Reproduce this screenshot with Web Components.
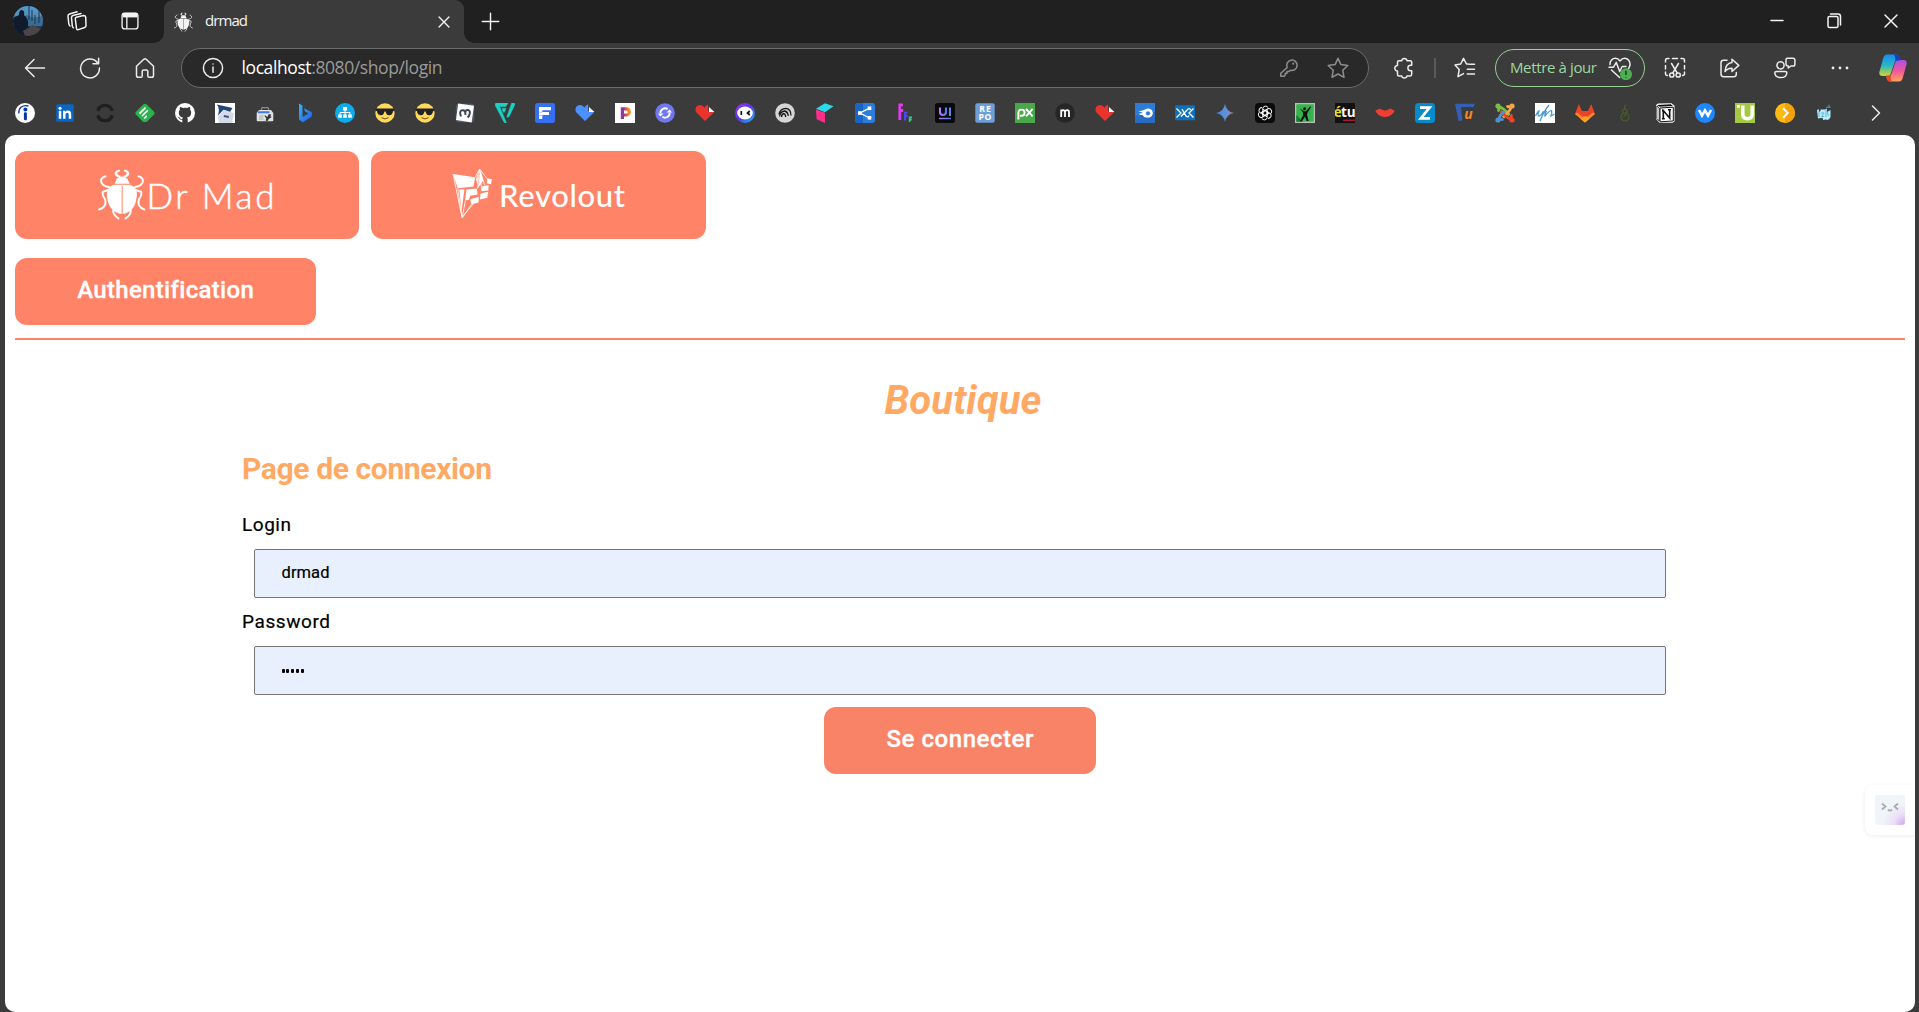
<!DOCTYPE html>
<html lang="fr">
<head>
<meta charset="utf-8">
<title>drmad</title>
<style>
html,body{margin:0;height:100%;overflow:hidden;background:#3b3b3b}
body{font-family:"Open Sans","Noto Sans",sans-serif}
</style>
</head>
<body>
<browser-window></browser-window>
<script>
const BEETLE = `<g fill="currentColor"><path d="M81 73L88 57Q95 51 104 51Q113 51 120 57L128 73Z"/><path d="M95 54C78 50 76 35 93 30L98 30L96 37L90 38C88 44 93 48 101 49ZM113 54C130 50 132 35 115 30L110 30L112 37L118 38C120 44 115 48 107 49Z"/><path d="M79 76H129C150 84 153 98 148 120C144 148 127 161 106 165V80H103V165C81 161 64 148 59 120C55 98 58 84 79 76Z"/></g><g fill="none" stroke="currentColor" stroke-width="6" stroke-linecap="round"><path d="M64 83C36 78 32 57 53 50M144 83C172 78 176 57 155 50"/><path d="M62 92L45 97Q42 107 51 119C57 134 50 147 33 151M146 92L163 97Q166 107 157 119C151 134 158 147 173 151"/><path d="M77 153Q76 167 93 178M131 153Q132 167 115 178"/></g>`;
const LINE = b => `<g fill="none" stroke="currentColor" stroke-width="1.5" stroke-linecap="round" stroke-linejoin="round">${b}</g>`;
const T = (x,y,s,f,t,extra='') => `<text x="${x}" y="${y}" font-size="${s}" fill="${f}" text-anchor="middle" font-family="Open Sans,sans-serif" font-weight="700" ${extra}>${t}</text>`;
const HEART = c => `<path d="M10 18L1.4 9.6C-.6 7 .6 2.2 4.6 2C7 1.9 8 3.3 9.6 4.4C11 2.6 12 1.6 13.2 1.6V8.2H19C19 9.6 18.4 10.2 17.4 11Z" fill="${c}"/><path d="M14 4L19.4 9H14Z" fill="#fff"/>`;
const COOL = `<circle cx="10" cy="10" r="9.7" fill="#ffd95c"/><path d="M.7 5.6H19.3V7.4L18 8.2C17.4 11.6 15.8 12.2 14 12.2S11.2 11 10.6 8.4H9.4C8.8 11 7.8 12.2 6 12.2S2.6 11.6 2 8.2L.7 7.4Z" fill="#222"/><path d="M6.5 14.6Q10 17.3 13.5 14.6" fill="none" stroke="#6b4d18" stroke-width="1"/>`;
const ICONS = {
 beetle:['30 25 148 158',BEETLE],
 revolout:['34 28 122 154',`<g fill="currentColor"><path d="M37 46L103 56L98 84L51 89Z"/><path d="M77 93L108 90L110 108L88 112L85 124L73 126Z"/><path d="M56 93L71 92L66 130L62 160Z"/><path d="M89 122L114 115L113 132L91 138Z"/><path d="M138 59L153 62L150 77L138 75Z"/><path d="M121 84L143 79L142 96L121 98Z"/><path d="M119 105L142 100L139 118L117 123Z"/><path d="M114 38L119 38L127 66L112 88L105 60Z"/></g><g fill="none" stroke="currentColor" stroke-width="2.5" stroke-linejoin="round"><path d="M103 56L116 31L138 60M110 90L116 31L121 84M116 31L131 80M37 46L64 178L51 89M64 178L74 126M64 178L92 138M64 178L97 136"/></g><path d="M116 42L111 84M107 62L113 44" stroke="#ff8367" stroke-width="1.6"/>`],
 avatar:['0 0 30 30',`<defs><clipPath id="c"><circle cx="15" cy="15" r="15"/></clipPath><linearGradient id="g" x2="0" y2="1"><stop stop-color="#4d9bd0"/><stop offset=".35" stop-color="#5c8db4"/><stop offset=".5" stop-color="#26496a"/><stop offset="1" stop-color="#162636"/></linearGradient></defs><g clip-path="url(#c)"><path d="M0 0H30V30H0Z" fill="url(#g)"/><path d="M0 9L8 12L14 9L20 12L30 10V20H0Z" fill="#3b6c93"/><path d="M16 0V14M19 4V15M22 9V18M26 3V17" stroke="#17364f" stroke-width="1"/><path d="M0 12L6 9Q6 4 9 4Q12 5 11 9Q16 13 15 20L22 30H0Z" fill="#101c2e"/><path d="M10 25L20 19L29 24L24 30H12Z" fill="#4b4548"/></g>`],
 spaces:['0 0 20 20',LINE(`<path d="M9.2 6.2L16.5 4.5Q18.5 4.5 18.7 6.2L19 14.5Q19 16 17.6 16.5L11.4 18.6Q9.8 19 9.5 17.4L8.3 8Q8.2 6.5 9.2 6.2Z"/><path d="M6.4 16.8Q5.5 16.2 5.3 15L4.5 6.8Q4.4 5 6 4.5L14 2.4M3 15Q2 14.2 1.8 13L1 5.2Q1 3.5 2.5 3L10 .8"/>`)],
 tabs:['0 0 20 20',`<path d="M2 1H18V6H2Z" fill="currentColor"/>`+LINE(`<rect x="1.2" y="1.2" width="17.6" height="17.6" rx="3"/><path d="M6.5 6V18"/>`)],
 close:['0 0 20 20',LINE(`<path d="M4.5 4.5L15.5 15.5M15.5 4.5L4.5 15.5"/>`)],
 plus:['0 0 20 20',LINE(`<path d="M10 1.3V18.7M1.3 10H18.7"/>`)],
 min:['0 0 20 20',LINE(`<path d="M4 9.5H16"/>`)],
 restore:['0 0 20 20',LINE(`<rect x="4" y="5.5" width="10" height="11" rx="1.5"/><path d="M6.5 3H14Q16.5 3 16.5 5.5V14"/>`)],
 wclose:['0 0 20 20',LINE(`<path d="M4 4L16 16M16 4L4 16"/>`)],
 back:['0 0 22 22',LINE(`<path d="M20.5 11H1.5M10 2.5L1.5 11L10 19.5"/>`)],
 reload:['0 0 22 22',LINE(`<path d="M18.5 5.8A9.4 9.4 0 1 0 20.4 11M19.6 1.3V6.8H14"/>`)],
 home:['0 0 22 22',LINE(`<path d="M2.5 9.3L9.8 2.3Q11 1.3 12.2 2.3L19.5 9.3V18.5Q19.5 20.3 17.8 20.3H15Q13.8 20.3 13.8 19V14.5Q13.8 13 12.3 13H9.7Q8.2 13 8.2 14.5V19Q8.2 20.3 7 20.3H4.2Q2.5 20.3 2.5 18.5Z"/>`)],
 info:['0 0 22 22',LINE(`<circle cx="11" cy="11" r="9.6"/><path d="M11 10V15.3M11 7V7.1"/>`)],
 key:['0 0 20 20',LINE(`<path d="M8.2 9.5A5.2 5.2 0 1 1 11.2 12.2L9.8 13.5H8V15.3H6.3V17L5 18.3H1.8V15.3Z"/><path d="M14.2 5.6V5.8" stroke-width="2"/>`)],
 star:['0 0 22 22',LINE(`<path d="M11 1.3L13.9 7.6L20.8 8.5L15.8 13.3L17 20.3L11 17L5 20.3L6.2 13.3L1.2 8.5L8.1 7.6Z"/>`)],
 puzzle:['0 0 22 22',LINE(`<path d="M6 3.7H8.7A2.7 2.7 0 0 1 14 3.7H17.2Q18.7 3.7 18.7 5.2V8.2H17.7A2.8 2.8 0 0 0 17.7 13.8H18.7V17.3Q18.7 18.9 17.2 18.9H14A2.7 2.7 0 0 1 8.7 18.9H6Q4.5 18.9 4.5 17.4V14A2.7 2.7 0 1 1 4.5 8.6V5.2Q4.5 3.7 6 3.7Z"/>`)],
 fav:['0 0 22 22',LINE(`<path d="M14 7H12.5L9.5 1.3L6.7 7L1 8L5.2 12.4L4 19.7L9.5 16.6M15 7.2H20.5M13.3 12.2H20.5M13.3 17H20.5"/>`)],
 heart:['0 0 24 24',LINE(`<path d="M2 8.5C1.8 4.6 4.4 2.3 7.4 2.3Q10 2.3 12 5Q14 2.3 16.6 2.3C20 2.3 22.3 5.2 22 8.8Q21.7 11 20.5 12.5M3.5 14L11.6 21.5M1 11.2H5.5L8.3 6.4L11.7 15.5L14.2 10.5H18"/>`)+`<circle cx="18" cy="18.2" r="6" fill="#4caf50"/><path d="M18 14.7V19M18 21V21.4" stroke="#1d3b1e" stroke-width="1.5"/>`],
 shot:['0 0 22 22',LINE(`<path d="M1.5 5V3.5Q1.5 1.5 3.5 1.5H5M8.5 1.5H13.5M17 1.5H18.5Q20.5 1.5 20.5 3.5V5M1.5 8.5V12M20.5 8.5V12M1.5 15V16.5Q1.5 18.5 3.5 18.5M20.5 15V16.5Q20.5 18.5 18.5 18.5M7.5 6.5L13.2 16M14.5 6.5L8.8 16"/><circle cx="7.8" cy="18" r="2.1"/><circle cx="14.2" cy="18" r="2.1"/>`)],
 share:['0 0 22 22',LINE(`<path d="M8 3.2H4.5Q2 3.2 2 5.7V17Q2 19.7 4.7 19.7H14.8Q17.3 19.7 17.3 17V15.5M13 2.2L19.8 8.4L13 14.5V11.2Q8.5 11 6 14.5Q6.5 6.2 13 5.5Z"/>`)],
 people:['0 0 22 22',LINE(`<circle cx="6.5" cy="8.3" r="3.6"/><path d="M2.5 14.5H11Q13 14.5 12.8 16C12.6 19 10 20.6 6.8 20.6S1 19 .8 16Q.8 14.5 2.5 14.5Z"/><path d="M13.3 1.2H19Q20.9 1.2 20.9 3V7.2Q20.9 9 19 9H17L14.3 11V9Q12 9 12 7V2.8Q12 1.2 13.3 1.2Z"/>`)],
 dots:['0 0 22 22',`<g fill="currentColor"><circle cx="4" cy="11" r="1.4"/><circle cx="11" cy="11" r="1.4"/><circle cx="18" cy="11" r="1.4"/></g>`],
 copilot:['0 0 28 28',`<defs><linearGradient id="a" x2="0" y2="1"><stop stop-color="#1b8cf0"/><stop offset=".5" stop-color="#26b6c7"/><stop offset="1" stop-color="#d6d52b"/></linearGradient><linearGradient id="b" x2="0" y2="1"><stop stop-color="#a850e8"/><stop offset=".5" stop-color="#f0569a"/><stop offset="1" stop-color="#ffa25a"/></linearGradient></defs><path d="M8 .5H17Q19.5 .5 20.3 4L21 6.5H18Q16 6.5 15.3 9L12 19Q11 22 8 22H3.5Q-.5 22 .5 17.5L4 5Q5 .5 8 .5Z" fill="url(#a)"/><path d="M20 27.5H11Q8.5 27.5 7.7 24L7 21.5H10Q12 21.5 12.7 19L16 9Q17 6 20 6H24.5Q28.5 6 27.5 10.5L24 23Q23 27.5 20 27.5Z" fill="url(#b)"/><path d="M15 .5H17Q19.5 .5 20.3 4L21 6.5H18Q17 6.5 16.3 7.3Q17 3 15 .5Z" fill="#123fc0"/><path d="M7 21.5H10Q11.5 21.5 12.2 20.5Q11 25 13 27.5H11Q8.5 27.5 7.7 24Z" fill="#e6462b"/>`],
 chev:['0 0 20 20',LINE(`<path d="M6.5 3L13.5 10L6.5 17"/>`)],
 face:['0 0 30 30',`<defs><radialGradient id="f" cx="1" cy="1" r=".75"><stop stop-color="#cda5ee"/><stop offset=".5" stop-color="#ebdff6"/><stop offset="1" stop-color="#f1f4f8"/></radialGradient></defs><rect width="30" height="30" rx="3" fill="url(#f)"/><path d="M7 8.5L10.5 11.5L7 14.5M23 8.5L19.5 11.5L23 14.5M13 14.4Q15 16.8 17 14.4" fill="none" stroke="#a6abb1" stroke-width="1.8"/>`]
};
/* Favicons of the bookmarks bar, in order, on a 20 unit grid */
const MARKS = [
`<circle cx="10" cy="10" r="10" fill="#fff"/><path d="M3.8 10.5C3.5 5 7.5 1.4 13.4 3" fill="none" stroke="#0b3aa8" stroke-width="1.3"/><circle cx="10.4" cy="6.4" r="2" fill="#0b3aa8"/><rect x="8.9" y="9.2" width="3" height="8" rx="1.2" fill="#0b3aa8"/>`,
`<rect x="1.2" y="1.2" width="17.6" height="17.6" rx="1.5" fill="#0a66c2"/><g fill="#fff"><rect x="3.8" y="7.8" width="2.5" height="8"/><circle cx="5" cy="5.2" r="1.5"/><path d="M8 7.8H10.4V9Q11.2 7.6 13 7.6Q16.2 7.6 16.2 11.2V15.8H13.7V11.7Q13.7 9.8 12.2 9.8T10.5 11.7V15.8H8Z"/></g>`,
`<path d="M2.8 7.8A7.5 7.5 0 0 1 17.2 7.8M17.2 12.2A7.5 7.5 0 0 1 2.8 12.2" fill="none" stroke="#1f1f1f" stroke-width="3.4"/>`,
`<path d="M10 .8Q11 .8 12 1.8L19 8.8Q20.4 10.2 19 11.6L12.2 18.4Q11.4 19 10 19T7.6 18.4L1 11.6Q-.4 10.2 1 8.8L8 1.8Q9 .8 10 .8Z" fill="#2bb24c"/><path d="M4.5 10.7L10.5 4.7M7 13L12.7 7.3M9.2 15.5L11.8 12.9" stroke="#fff" stroke-width="1.7"/>`,
`<circle cx="10" cy="10" r="10" fill="#fff"/><path d="M7.3 20V16.8Q4.8 17.2 4 15.2L2.8 14.2Q4.4 13.7 5.2 15.4Q6 16.3 7.4 15.7Q7.5 15 8 14.5Q3.8 14 3.8 9.8Q3.8 8 4.9 6.8Q4.4 5.2 5.1 4Q6.4 4 7.9 5.1Q10 4.5 12.1 5.1Q13.6 4 14.9 4Q15.6 5.2 15.1 6.8Q16.2 8 16.2 9.8Q16.2 14 12 14.5Q12.7 15.2 12.7 16.5V20Z" fill="#3b3b3b"/>`,
`<path d="M0 0H20V20H0Z" fill="#fff"/><path d="M2 1.5L17.5 5L15 9L8.5 6.8L3 12.5Q5 6 2 1.5Z" fill="#214778"/><path d="M3 14L9 6.8L19 10.2L17 20H4Z" fill="#d5dae5"/><path d="M9 12L14 13L13.6 15L8.7 14Z" fill="#35598c"/>`,
`<path d="M6.5 8V5.6Q6.5 4.7 7.4 4.7H12.6Q13.5 4.7 13.5 5.6V8" fill="none" stroke="#8b8f95" stroke-width="1.2"/><path d="M4 7H16L18.3 10V17.3Q18.3 18.3 17.3 18.3H2.7Q1.7 18.3 1.7 17.3V10Z" fill="#dfe1e4"/><path d="M3.3 8.3H14.5V10.2H2.6Z" fill="#3d7de8"/><path d="M4 12H8.5V17H4Z" fill="#c3c6ca"/><path d="M9.5 12.6Q11 12.4 11.5 13.6L12.5 13.9L13.4 11.4Q15 11 16.3 11.6L15.2 13.2L16.6 13.8Q15.8 15.6 14 15.5L12.4 18.3L10.7 17.5L11.3 15Q9.8 14.6 9.5 12.6Z" fill="#333"/>`,
`<defs><linearGradient id="bg" x2="1" y2="1"><stop stop-color="#36b5fa"/><stop offset="1" stop-color="#2459e6"/></linearGradient></defs><path d="M4 .5L7.5 2.5V14L13.5 10.5L10 8.5L9 5.3L16.5 9Q18.2 11.5 16.5 13.7L7.8 19.3L4 16.5Z" fill="url(#bg)"/>`,
`<circle cx="10" cy="10" r="10" fill="#0cabec"/><g fill="#fff"><path d="M8 4H12V7.5H8ZM3.2 11.5H6.8V14.7H3.2ZM8.2 11.5H11.8V14.7H8.2ZM13.2 11.5H16.8V14.7H13.2Z"/></g><path d="M5 12V9.5H15V12M10 7V12" stroke="#fff" fill="none"/>`,
COOL,COOL,
`<rect x=".8" y=".8" width="18.4" height="18.4" rx="3" fill="#4e5a6c"/><path d="M3.2 .6L19 2.8L16.6 19.4L1 17Z" fill="#fff"/><path d="M6 13.5L5.2 10.8Q4.8 7 8 7.2Q10.2 7.3 10.3 9.6Q10.5 6.6 13 7Q15.6 7.6 14.6 11Q14 13.4 12.6 14.6M10.3 9.3L10.5 12" fill="none" stroke="#3d4756" stroke-width="2"/>`,
`<path d="M0 1.5Q0 0 1.6 0H13L10.8 3.4H4.6L11.5 20Q9.6 20.4 8.8 18.7L.5 3Q0 2 0 1.5ZM7 5.6H11L9.4 9.3H8.3ZM16.7 0H18.7Q20.4 0 19.7 2L14.3 13.3Q13.5 14.7 11.8 14Z" fill="#1ad1c4" stroke="#1ad1c4" stroke-width=".5"/>`,
`<rect width="20" height="20" rx="2.5" fill="#356ff2"/><path d="M4 16V4H16V7.2H7.3V9H14V12H7.3V16Z" fill="#fff"/><path d="M3.8 9.2H7.3M3.8 12.5H7.3" stroke="#a9c3ff"/>`,
HEART('#4a90ff'),
`<path d="M0 0H20V20H0Z" fill="#fff"/><defs><linearGradient id="pg" x2="1" y2="0"><stop offset=".2" stop-color="#8a3c9c"/><stop offset=".5" stop-color="#e8543f"/><stop offset="1" stop-color="#ef9a2d"/></linearGradient></defs><path d="M7.4 16V5.8H11.3A3.1 3.1 0 0 1 11.3 12H8" fill="none" stroke="url(#pg)" stroke-width="3.2"/>`,
`<circle cx="10" cy="10" r="9.8" fill="#7177ec"/><path d="M5.4 10.3A4.6 4.6 0 0 1 12.6 6.2M14.6 9.7A4.6 4.6 0 0 1 7.4 13.8" fill="none" stroke="#fff" stroke-width="1.9"/><path d="M11.5 9.5H17L14.6 6.5ZM8.5 10.5H3L5.4 13.5Z" fill="#fff"/>`,
HEART('#e8332e'),
`<defs><linearGradient id="dg" x2="1" y2="1"><stop stop-color="#a52cf0"/><stop offset=".5" stop-color="#5538f0"/><stop offset="1" stop-color="#19c9ee"/></linearGradient></defs><circle cx="10" cy="10" r="10" fill="url(#dg)"/><ellipse cx="10" cy="10" rx="7.8" ry="6.5" fill="#fff"/><path d="M6.3 8V12M14.8 8L12.5 10L14.8 12" stroke="#111" stroke-width="1.7" fill="none"/>`,
`<circle cx="10" cy="10" r="9.8" fill="#d5d5d5"/><g fill="none" stroke="#191919" stroke-width="1.3"><path d="M4 11.5Q5 5.5 11 5.3Q16 6 16 12.5M4.6 13.5Q5 8.5 9.8 8Q13 8.5 13.2 13M6.5 14Q6.6 11 9 10.5Q10.6 11 10.6 14M10 8Q13 10 13.2 13"/></g>`,
`<path d="M10 .2L18.5 3.2L10 9.2L1 5.8Z" fill="#29dbe6"/><path d="M1 6.4L10 9.8V20L1.6 16.3Z" fill="#ff2e88"/>`,
`<rect width="20" height="20" rx="3" fill="#2c7cdd"/><path d="M0 3Q0 0 3 0H8V20H3Q0 20 0 17Z" fill="#1965c6"/><path d="M14.5 5.2L5 10L14.5 15" fill="none" stroke="#fff" stroke-width="1.4"/><g fill="#fff"><rect x="12.7" y="3.5" width="3.6" height="3.6"/><rect x="3" y="8.2" width="3.6" height="3.6"/><rect x="12.7" y="13" width="3.6" height="3.6"/></g>`,
`<path d="M4.8 17V1.8H8M4.8 7.5H8.2" fill="none" stroke="#e13af0" stroke-width="2.8"/><path d="M10 17.5V9.8H12.6M10 13H12.6" fill="none" stroke="#4c46ff" stroke-width="2"/><path d="M14.6 19V14.4H17M14.6 16.6H16.8" fill="none" stroke="#27cf85" stroke-width="1.7"/>`,
`<defs><linearGradient id="ug" x2="1" y2="0"><stop stop-color="#b57bff"/><stop offset="1" stop-color="#4d7fe6"/></linearGradient></defs><rect width="20" height="20" rx="2.5" fill="#0a0a0c"/><path d="M5 4.5V9Q5 12 8 12T11 9V4.5" fill="none" stroke="url(#ug)" stroke-width="2.1"/><path d="M14 4.5H16V13H14Z" fill="#6583e8"/><path d="M4 14.8H16V16.2H4Z" fill="url(#ug)"/>`,
`<rect x=".3" y=".2" width="19.4" height="19.6" rx="2" fill="#6f9fd8"/>`+T(10.5,9,8.6,'#fff','RE','letter-spacing="1"')+T(10.2,17.2,8.6,'#fff','PO','letter-spacing=".5"'),
`<path d="M0 0H20V20H0Z" fill="#48a84a"/><g fill="none" stroke="#fff" stroke-width="1.9"><path d="M3.4 16.5V9.6A3.1 3.1 0 1 1 6.5 12.8H5M11 5.8L17.6 13.3M17.6 5.8L11 13.3"/></g>`,
`<circle cx="10" cy="10" r="9.8" fill="#262626"/><path d="M6.2 14V6.5M6.2 9.2Q6.4 7.2 8.1 7.2T10 9.2V14M10 9.2Q10.3 7.2 12.2 7.2T14 9.2V14" fill="none" stroke="#fff" stroke-width="1.8"/>`,
HEART('#e8332e'),
`<path d="M0 0H20V20H0Z" fill="#2d7cd8"/><path d="M0 13L20 9V20H0Z" fill="#286dc3"/><path d="M2 7.4Q6 9 10 6.6Q14 4 17 7.2Q19.4 12.2 14.6 14.4Q9 15.2 7.6 12Q5 12.4 3.8 10.7L8.2 10Z" fill="#fff"/><circle cx="13" cy="10.3" r="2.1" fill="#2d7cd8"/>`,
`<rect y="2.3" width="20" height="15" rx="1" fill="#0c70bd"/><path d="M1.5 5.5L6 10L1.5 14.5M6 13.5L13 6Q15 5 15.5 7M7 6L11 13Q13 15 14 12.5M18.5 5.5L14 10L18.5 14.5" fill="none" stroke="#fff" stroke-width="1.3"/>`,
`<defs><linearGradient id="gg" x1="0" x2="1"><stop stop-color="#3e8ce8"/><stop offset=".6" stop-color="#6490d6"/><stop offset="1" stop-color="#ba7389"/></linearGradient></defs><path d="M10 1Q11.3 8.7 19 10Q11.3 11.3 10 19Q8.7 11.3 1 10Q8.7 8.7 10 1Z" fill="url(#gg)"/>`,
`<rect width="20" height="20" rx="4" fill="#0b0b0b"/><g fill="none" stroke="#fff" stroke-width=".95">${[0,60,120,180,240,300].map(a=>`<path transform="rotate(${a} 10 10)" d="M7.8 11.3V5.4Q8.2 3.2 10.4 3.1Q12.2 3.1 13.3 4.7M12.2 11.3V8.7L7.8 6.2"/>`).join('')}</g>`,
`<path d="M0 0H20V20H0Z" fill="#b9bdb9"/><path d="M1.3 1.3H18.7V18.7H1.3Z" fill="#34b44a"/><path d="M1.3 18.7V12L8 18.7Z" fill="#177c2e"/><circle cx="9.6" cy="5.8" r="1.5" fill="#111"/><path d="M4.8 5.2L9 8.3H11L15.3 3.2L16 4.2L12.6 9.6L12 12L13.8 18H11.6L10 13.5L7 18.2H4.8L8 12.5V9.6Z" fill="#111"/>`,
`<path d="M0 0H20V20H0Z" fill="#111"/><path d="M8 16.5H20V18H8Z" fill="#a6192e"/>`+T(2.8,14.2,13.5,'#ece032','é')+T(13.3,14.2,13.5,'#fff','tu'),
`<path d="M.3 7.8L4.8 5.4Q10 9.4 15.2 5.4L19.7 7.8Q17 13.8 10 14Q3 13.8 .3 7.8Z" fill="#f03e35"/>`,
`<rect width="20" height="20" rx="3.5" fill="#078bc9"/><path d="M5 4.6H14.5L5.8 15.4H15" fill="none" stroke="#fff" stroke-width="2.7"/>`,
`<path d="M0 .7H20L18.5 4H6L7.5 17.5L3.5 18Z" fill="#355fb2"/>`+T(13.5,15.5,14,'#f6861f','u','font-style="italic"'),
`<g fill="none" stroke-width="3"><path d="M4.2 8.5Q2.5 5.5 5.5 4.5Q7.5 4.5 14.5 12.2" stroke="#7ac143"/><path d="M11.6 4.3Q14 2.6 15.6 5Q15.8 7 8 14.5" stroke="#f9a541"/><path d="M15.7 11.6Q17.4 14 15 15.6Q13 15.8 5.5 8" stroke="#f44321"/><path d="M8.3 15.7Q6 17.4 4.4 15Q4.2 13 9.5 8" stroke="#5091cd"/></g><circle cx="3" cy="3" r="2.6" fill="#7ac143"/><circle cx="17" cy="3" r="2.6" fill="#f9a541"/><circle cx="17" cy="17" r="2.6" fill="#f44321"/><circle cx="3" cy="17" r="2.6" fill="#5091cd"/>`,
`<path d="M0 0H20V20H0Z" fill="#fff"/><path d="M.5 13Q3 8 4 8Q2 13 4 13T8.5 8M14 2Q9 8 5 18M6 11.5Q9 10 11.5 8Q9 13 10 13Q13.5 8.5 16 7.5Q17.5 7.5 16 13L19.5 11" fill="none" stroke="#499dd5" stroke-width="1.3"/>`,
`<path d="M3.8 1L7 8H13L16.2 1L20 11L10 19.6L0 11Z" fill="#e8442a"/><path d="M0 11L2 9.5L10 15.5L18 9.5L20 11L10 19.6Z" fill="#fc8426"/><path d="M5.5 15.7L10 12.3L14.5 15.7L10 19.6Z" fill="#fca326"/><path d="M5 8H15L10 14Z" fill="#e8442a"/>`,
`<path d="M10 18A4.1 4.1 0 1 1 12.4 10.5M10 18A4 4 0 0 0 12.8 11.2M8 10.5Q6.5 6.5 9.8 6Q13 6.5 11.7 10L8.5 14M10 6Q9 3 11 1.8" fill="none" stroke="#4b6027" stroke-width="1.1"/>`,
`<path d="M1 2L3 .6L16.5 .2L19.5 2.7V18.5L17.5 19.8L4.5 19.8L1 16Z" fill="#fff"/><path d="M2 2L15.8 1.3L18 3L4.5 3.8Z" fill="#111"/><path d="M1.8 3L4.2 5V18L1.8 15.5Z" fill="#fff" stroke="#111" stroke-width=".8"/><path d="M5 5L18.3 4.2V18L5 18.8Z" fill="#fff" stroke="#111"/><path d="M8.3 15.7V7.6L14.7 15V6.8M7 7.6H9.3M13 6.8H16M7 15.7H9.8" fill="none" stroke="#111" stroke-width="1.6"/>`,
`<circle cx="10" cy="10" r="10" fill="#1f87ff"/><path d="M4 7L7 12.7L10 7.3L13 12.7L16 7" fill="none" stroke="#fff" stroke-width="2.5"/>`,
`<path d="M0 0H20V20H0Z" fill="#a6c944"/><path d="M7.8 2.5V11Q7.8 15.7 12.5 15.7T17.2 11V2.5" fill="none" stroke="#fff" stroke-width="3.5"/><path d="M2 2H4.8V4.8H2Z" fill="#fff"/>`,
`<circle cx="10" cy="10" r="10" fill="#fdba13"/><path d="M10 0A10 10 0 0 1 10 20Z" fill="#f5a10c"/><path d="M8.2 5.3L12.7 10L8.2 14.7" fill="none" stroke="#fff" stroke-width="2"/>`,
`<path d="M2 7L4 6.2V9L5.5 8V6.5H10L12 5.5V9L15.5 7V14Q14 18 11 16.5L8 17L7.5 14.8L3 15.5Z" fill="#b9ecfa"/><path d="M4 8V14M6 10H9L6.5 13.5H9M11 6.5V14M12.5 9L13.3 13" fill="none" stroke="#4fb2d6" stroke-width=".9"/><path d="M10.5 5L14.2 1.3L16 5Z" fill="#3f7c96"/>`
];

class UiIcon extends HTMLElement{
  connectedCallback(){
    const r=this.attachShadow({mode:'open'}), n=this.getAttribute('name'), w=this.getAttribute('w')||20, h=this.getAttribute('h')||w;
    const [vb,body]=ICONS[n];
    r.innerHTML=`<style>:host{display:inline-flex;flex:none}svg{display:block}</style><svg width="${w}" height="${h}" viewBox="${vb}" preserveAspectRatio="none">${body}</svg>`;
  }
}
customElements.define('ui-icon',UiIcon);

/* A single-line label whose letter spacing is tuned to fill a given width */
class FitLabel extends HTMLElement{
  connectedCallback(){
    const r=this.attachShadow({mode:'open'});
    r.innerHTML=`<style>:host{display:block;white-space:nowrap;width:max-content}span{display:inline-block}</style><span><slot></slot></span>`;
    const s=r.querySelector('span'), w=+this.getAttribute('w'), n=this.textContent.length;
    const gap=(w-s.getBoundingClientRect().width)/(n-1);
    s.style.letterSpacing=gap+'px';
    s.style.marginRight=-gap+'px';
  }
}

class TabStrip extends HTMLElement{
  connectedCallback(){
    this.attachShadow({mode:'open'}).innerHTML=`<style>
    :host{display:flex;height:43px;background:#202020;color:#f3f3f3;align-items:center}
    .left{display:flex;width:164px;align-items:center;padding-left:13px;box-sizing:border-box;margin-top:-1px}
    .left ui-icon:nth-child(2){margin-left:24px}.left ui-icon:nth-child(3){margin-left:34px}
    .tab{position:relative;display:flex;align-items:center;width:300px;height:43px;padding:0 11px 0 10px;box-sizing:border-box;background:#3b3b3b;border-radius:9px 9px 0 0}
    .tab::before,.tab::after{content:"";position:absolute;bottom:0;width:10px;height:10px}
    .tab::before{left:-10px;background:radial-gradient(circle at 0 0,transparent 9.5px,#3b3b3b 10px)}
    .tab::after{right:-10px;background:radial-gradient(circle at 100% 0,transparent 9.5px,#3b3b3b 10px)}
    fit-label{margin-left:12px;font:15px/20px "Open Sans",sans-serif;flex:1;margin-top:-3px}
    .plus{margin:-1px 0 0 17px}.win{margin:-1px 0 0 auto;display:flex;gap:37px;padding-right:18px}
    </style>
    <div class="left"><ui-icon name="avatar" w="30"></ui-icon><ui-icon name="spaces" w="20"></ui-icon><ui-icon name="tabs" w="18"></ui-icon></div>
    <div class="tab"><ui-icon name="beetle" w="19" h="20"></ui-icon><fit-label w="43">drmad</fit-label><ui-icon name="close" w="18"></ui-icon></div>
    <ui-icon class="plus" name="plus" w="19"></ui-icon>
    <div class="win"><ui-icon name="min"></ui-icon><ui-icon name="restore"></ui-icon><ui-icon name="wclose"></ui-icon></div>`;
  }
}
class ToolBar extends HTMLElement{
  connectedCallback(){
    const c=(n,w=22,h=w)=>`<div class="cell"><ui-icon name="${n}" w="${w}" h="${h}"></ui-icon></div>`;
    this.attachShadow({mode:'open'}).innerHTML=`<style>
    :host{display:flex;height:49px;align-items:center;padding-left:7.5px;color:#ececec;background:#3b3b3b}
    .cell{width:55px;display:flex;justify-content:center;flex:none}
    .url{display:flex;align-items:center;width:1188px;height:40px;box-sizing:border-box;border:1px solid #6c6c6c;border-radius:20px;background:#292929;margin:0 8px 0 8px;padding:0 19px 0 20px;flex:none}
    fit-label{font:17.5px/24px "Open Sans",sans-serif;color:#9a9a9a}b{font-weight:400;color:#fff}
    .url fit-label{margin:-1px 0 0 18px}.url .k{margin-left:auto;color:#8e8e8e;display:flex;gap:28px;align-items:center}
    .sep{width:2px;height:20px;background:#5a5a5a;margin:0 2px}
    .upd{display:flex;align-items:center;box-sizing:border-box;width:150px;height:38px;border:1.5px solid #94d295;border-radius:19px;margin:0 2.5px;padding-left:14px;flex:none}
    .upd fit-label{font-size:15px;color:#9fd89f;margin-top:-1px}.upd ui-icon{margin-left:11px;color:#ececec}
    </style>${c('back')}${c('reload')}${c('home')}
    <div class="url"><ui-icon name="info" w="22"></ui-icon><fit-label w="201"><b>localhost</b>:8080/shop/login</fit-label><div class="k"><ui-icon name="key" w="20"></ui-icon><ui-icon name="star" w="22"></ui-icon></div></div>
    ${c('puzzle')}<div class="sep"></div>${c('fav')}
    <div class="upd"><fit-label w="87">Mettre à jour</fit-label><ui-icon name="heart" w="24"></ui-icon></div>
    ${c('shot')}${c('share')}${c('people')}${c('dots')}<ui-icon name="copilot" w="28" style="margin-left:11px"></ui-icon>`;
  }
}
class BookmarkBar extends HTMLElement{
  connectedCallback(){
    this.attachShadow({mode:'open'}).innerHTML=`<style>
    :host{display:flex;height:43px;align-items:center;gap:20px;padding:0 0 1px 15px;background:#3b3b3b;color:#ececec;box-sizing:border-box}
    svg{flex:none;display:block;overflow:hidden}ui-icon{margin-left:11px}
    </style>${MARKS.map(m=>`<svg width="20" height="20" viewBox="0 0 20 20">${m}</svg>`).join('')}<ui-icon name="chev"></ui-icon>`;
  }
}
class NavButton extends HTMLElement{
  connectedCallback(){
    this.attachShadow({mode:'open'}).innerHTML=`<style>
    :host{display:flex;justify-content:center;box-sizing:border-box;border-radius:12px;background:var(--fill,#ff8367);color:#fff;font:500 24px/30px Roboto,sans-serif;-webkit-text-stroke:.3px #fff}
    </style><slot></slot>`;
  }
}
class FormField extends HTMLElement{
  connectedCallback(){
    this.attachShadow({mode:'open'}).innerHTML=`<style>
    :host{display:flex;flex-direction:column;height:97px}
    .label{height:37px;font:19px/26px Roboto,sans-serif;color:#000;-webkit-text-stroke:.2px #000;box-sizing:border-box}
    .box{margin-left:12px;width:1412px;height:49px;box-sizing:border-box;border:1px solid #767676;border-radius:2px;background:#e8f0fe;padding:12px 0 0 26.5px;font:16.5px/22px Roboto,sans-serif;color:#000;-webkit-text-stroke:.2px #000}
    </style><div class="label"><slot name="label"></slot></div><div class="box"><slot></slot></div>`;
  }
}
class ShopPage extends HTMLElement{
  connectedCallback(){
    this.attachShadow({mode:'open'}).innerHTML=`<style>
    :host{display:flex;flex-direction:column;box-sizing:border-box;width:1910px;height:877px;margin-left:5px;background:#fff;border-radius:10px;padding:16px 9px 0 10px;position:relative;font-family:Roboto,sans-serif}
    .row{display:flex;gap:12px}.row nav-button{height:88px;padding-top:17px}
    .dr{width:344px}.re{width:335px}
    .dr ui-icon{margin-left:-2px}
    .dr fit-label{font:300 35px/42px Lato,sans-serif;-webkit-text-stroke:.5px #fff;margin:6px 0 0 1px}
    .re fit-label{font:500 31px/42px Lato,sans-serif;-webkit-text-stroke:0;margin:6px 0 0 6px}
    .auth{width:301px;height:67px;margin-top:19px;padding-top:17px}
    hr{width:1890px;height:2px;border:0;margin:13px 0 0;background:#ff8367}
    h1,h2{margin:0;color:#ffa965}
    h1{font:italic 700 40px/48px Roboto,sans-serif;align-self:center;margin:37px 0 0 5px}
    .form{display:flex;flex-direction:column;width:1424px;margin-left:227px}
    h2{font:700 30px/36px Roboto,sans-serif;margin:26px 0 25px}
    .pw{display:flex;gap:1.75px;padding-top:10px}.pw i{width:3px;height:4px;border-radius:1px;background:#000}
    .go{--fill:#f98367;width:272px;height:67px;margin:1px 0 0 582px;padding-top:17px}
    .widget{position:absolute;right:0;top:650px;width:50px;height:50px;box-sizing:border-box;padding:10px;border-radius:8px 0 0 8px;background:#fff;box-shadow:0 1px 4px #00000014;clip-path:inset(-6px 0 -6px -6px)}
    </style>
    <div class="row">
      <nav-button class="dr"><ui-icon name="beetle" w="48" h="52"></ui-icon><fit-label w="128">Dr Mad</fit-label></nav-button>
      <nav-button class="re"><ui-icon name="revolout" w="41" h="51"></ui-icon><fit-label w="126">Revolout</fit-label></nav-button>
    </div>
    <nav-button class="auth"><fit-label w="176">Authentification</fit-label></nav-button>
    <hr>
    <h1><fit-label w="157">Boutique</fit-label></h1>
    <div class="form">
      <h2><fit-label w="250">Page de connexion</fit-label></h2>
      <form-field><fit-label slot="label" w="49">Login</fit-label><fit-label w="48">drmad</fit-label></form-field>
      <form-field><fit-label slot="label" w="88">Password</fit-label><div class="pw"><i></i><i></i><i></i><i></i><i></i></div></form-field>
      <nav-button class="go"><fit-label w="147">Se connecter</fit-label></nav-button>
    </div>
    <div class="widget"><ui-icon name="face" w="30"></ui-icon></div>`;
  }
}
class BrowserWindow extends HTMLElement{
  connectedCallback(){
    this.attachShadow({mode:'open'}).innerHTML=`<style>:host{display:flex;flex-direction:column;width:1919px;height:1012px;background:#3b3b3b}</style>
    <tab-strip></tab-strip><tool-bar></tool-bar><bookmark-bar></bookmark-bar><shop-page></shop-page>`;
  }
}
customElements.define('nav-button',NavButton);
customElements.define('form-field',FormField);
customElements.define('tab-strip',TabStrip);
customElements.define('tool-bar',ToolBar);
customElements.define('bookmark-bar',BookmarkBar);
customElements.define('shop-page',ShopPage);
customElements.define('browser-window',BrowserWindow);
/* Labels are upgraded last, once their slots are laid out and their fonts apply */
customElements.define('fit-label',FitLabel);
</script>
</body>
</html>
